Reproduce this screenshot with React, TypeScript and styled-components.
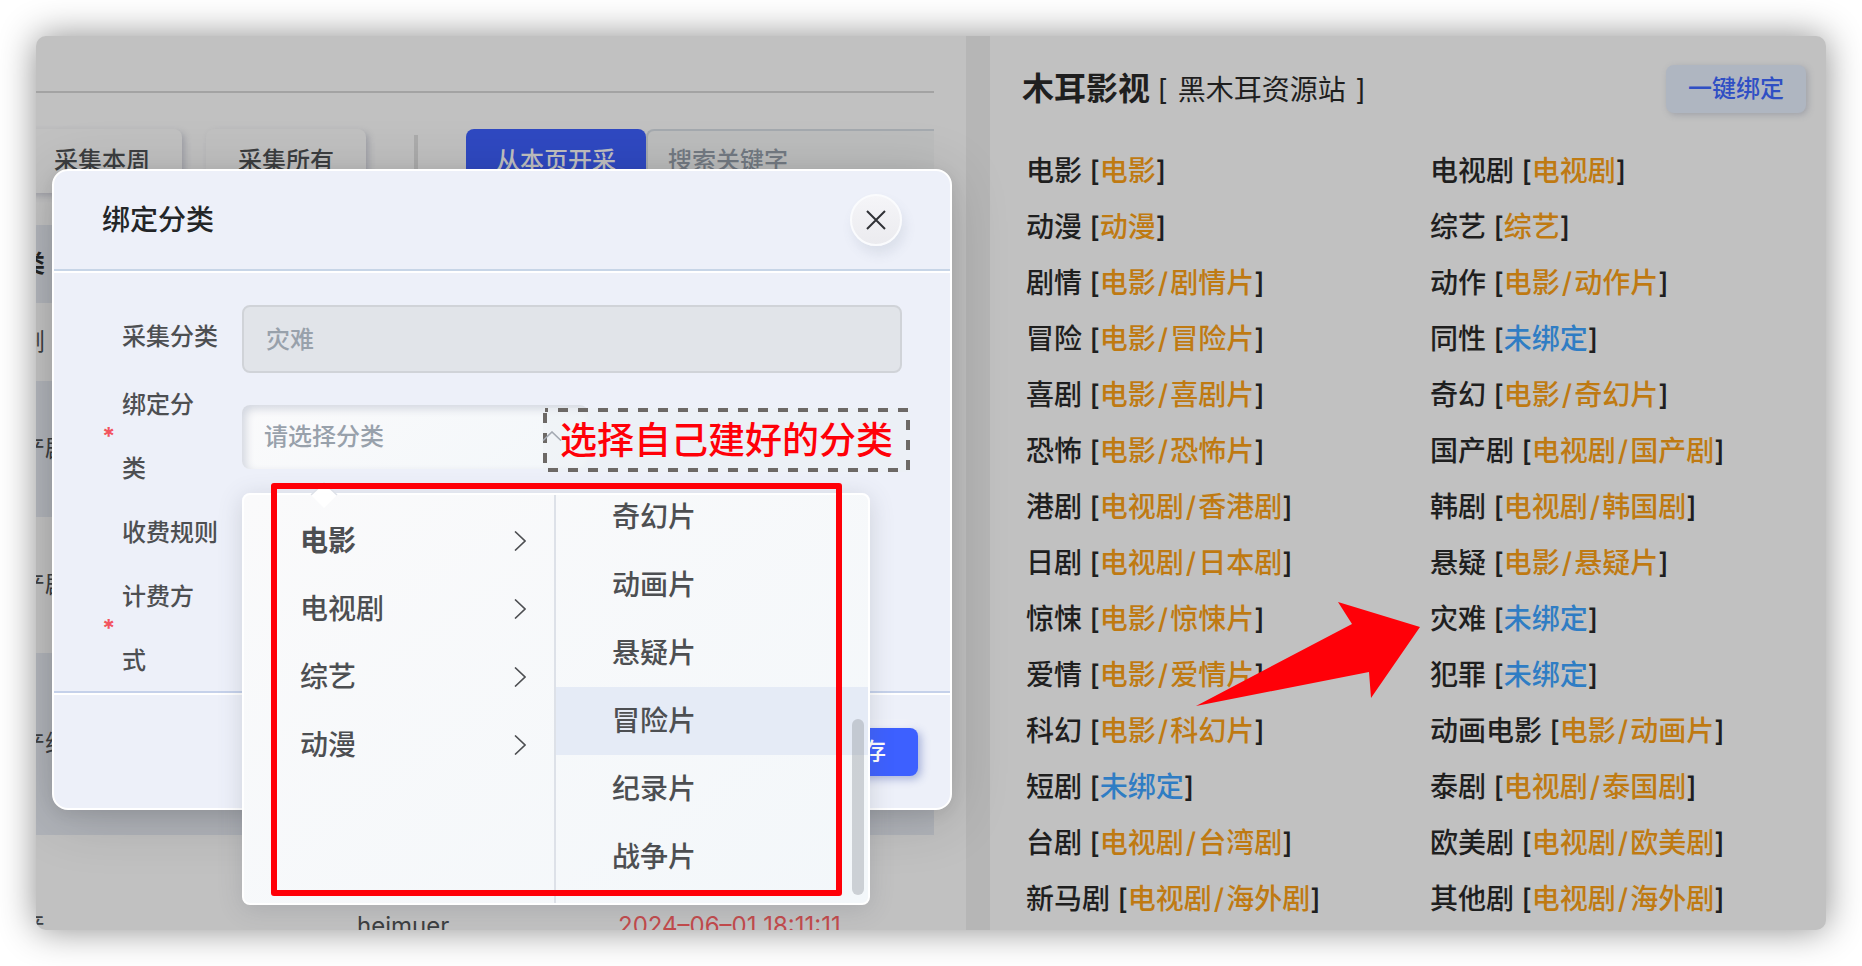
import React from "react";
import styled, { createGlobalStyle, css } from "styled-components";

const GlobalStyle = createGlobalStyle`
  *, *::before, *::after { box-sizing: border-box; }
  body {
    margin: 0;
    background: #fff;
    font-family: Inter, "Noto Sans CJK SC", sans-serif;
    font-size: 24px;
    font-weight: 500;
    line-height: 32px;
    color: #3c3e40;
  }
  button, input { font: inherit; }
  ul { list-style: none; margin: 0; padding: 0; }
`;

const Page = styled.div`
  padding: 36px;
`;

const Frame = styled.main`
  height: calc(100vh - 72px);
  min-height: 894px;
  border-radius: 10px;
  background: #c1c1c1;
  box-shadow: 0 0 36px rgba(0, 0, 0, 0.45);
`;

const Split = styled.div`
  display: grid;
  grid-template-columns: minmax(0, 930fr) 24px minmax(0, 836fr);
  height: 100%;
  overflow: hidden;
  border-radius: 10px;
`;

/* Left side: collection table */

const CollectPane = styled.section`
  position: relative;
  z-index: 1;
  min-width: 0;
  padding-right: 32px;
`;

const TopBar = styled.div`
  height: 57px;
  border-bottom: 2px solid #a3a3a3;
`;

const Toolbar = styled.div`
  display: flex;
  height: 64px;
  margin: 36px 0 32px -14px;
`;

const ToolButton = styled.button<{ $primary?: boolean }>`
  height: 64px;
  border: 0;
  border-radius: 8px;
  white-space: nowrap;
  ${({ $primary }) =>
    $primary
      ? css`
          padding: 0 30px;
          background: #2f49c2;
          color: #c1c1c1;
        `
      : css`
          padding: 0 32px;
          margin-right: 24px;
          background: #c1c1c1;
          color: #3c3e40;
          box-shadow: 3px 3px 6px rgba(110, 112, 130, 0.4);
        `}
`;

const ToolDivider = styled.span`
  width: 4px;
  margin: 6px 48px 6px 24px;
  background: #acacac;
`;

const SearchInput = styled.input`
  flex: 1;
  min-width: 0;
  padding: 0 20px;
  border: 2px solid #a5aaaf;
  border-right: 0;
  border-radius: 8px 0 0 8px;
  background: #bcbdbd;
  &::placeholder { color: #737a83; opacity: 1; }
`;

const RecordTable = styled.table`
  width: 100%;
  border-collapse: collapse;
  table-layout: fixed;
  text-align: left;
`;

const RecordRow = styled.tr<{ $height: number; $tinted?: boolean }>`
  height: ${({ $height }) => $height}px;
  background: ${({ $tinted }) => ($tinted ? "#b0b3b9" : "transparent")};
  th, td { padding: 0; white-space: nowrap; }
  td { font-weight: 400; }
  th { color: #232323; font-weight: 700; }
`;

const CategoryText = styled.span`
  margin-left: -39px;
`;

const TimeText = styled.span`
  color: #c24a4c;
`;

const Gutter = styled.div`
  background: #b6b6b6;
`;

/* Right side: category bindings */

const BindPane = styled.section`
  min-width: 0;
  padding: 29px 0 0 32px;
  color: #1f1f1f;
`;

const BindHeader = styled.header`
  display: flex;
  align-items: center;
  justify-content: space-between;
  height: 48px;
  margin-bottom: 30px;
  padding-right: 20px;
`;

const SiteTitle = styled.h1`
  margin: 0;
  font-size: 32px;
  line-height: 48px;
  white-space: nowrap;
  small { font-size: 28px; font-weight: 400; }
`;

const SiteName = styled.span`
  margin: 0 2px;
`;

const QuickBind = styled.button`
  height: 48px;
  padding: 0 22px;
  border: 0;
  border-radius: 8px;
  background: #afb6c1;
  color: #2f4fc4;
  box-shadow: 2px 2px 6px rgba(100, 105, 125, 0.35);
`;

const BindList = styled.ul`
  display: grid;
  grid-template-columns: 404fr 396fr;
  && { padding-left: 4px; }
`;

const BindItem = styled.li`
  position: relative;
  font-size: 28px;
  line-height: 56px;
  white-space: nowrap;
`;

const BindTarget = styled.span<{ $bound: boolean }>`
  color: ${({ $bound }) => ($bound ? "#bf7a12" : "#2f7dc4")};
`;

const Slash = styled.span`
  margin: 0 2px;
`;

const PointerArrow = styled.svg`
  position: absolute;
  left: -235px;
  top: 11px;
  z-index: 1;
`;

/* Dialog */

const Dialog = styled.section`
  position: absolute;
  left: 16px;
  right: 14px;
  top: 133px;
  border: 2px solid #fff;
  border-radius: 16px;
  background: #edf0f9;
  box-shadow: 0 8px 60px rgba(0, 0, 0, 0.16), 0 4px 16px rgba(0, 0, 0, 0.08);
`;

const DialogHeader = styled.header`
  display: flex;
  align-items: center;
  justify-content: space-between;
  height: 100px;
  padding: 0 48px;
  border-bottom: 2px solid #c7d5e7;
`;

const DialogTitle = styled.h2`
  margin: 0;
  font-size: 28px;
  font-weight: 500;
  color: #232527;
`;

const CloseButton = styled.button`
  display: grid;
  place-items: center;
  width: 52px;
  height: 52px;
  padding: 0;
  border: 2px solid #fafbfd;
  border-radius: 50%;
  background: linear-gradient(#f5f5f8, #ebebef);
  box-shadow: 3px 8px 12px rgba(90, 110, 130, 0.12);
`;

const DialogBody = styled.form`
  height: 422px;
  padding: 32px 48px 0;
  border-top: 2px solid #fff;
`;

const Field = styled.div`
  display: flex;
  align-items: flex-start;
`;

const FieldLabel = styled.label<{ $required?: boolean }>`
  display: flex;
  align-items: center;
  flex: none;
  width: 140px;
  padding-left: ${({ $required }) => ($required ? 0 : 20)}px;
  line-height: 64px;
  color: #4d4f52;
  span { width: ${({ $required }) => ($required ? 72 : 96)}px; }
`;

const Star = styled.i`
  width: 20px;
  font-style: normal;
  font-weight: 700;
  color: #f2545f;
`;

const DisabledInput = styled.input`
  flex: 1;
  min-width: 0;
  height: 68px;
  padding: 0 22px 4px;
  border: 2px solid #d0d3d8;
  border-radius: 8px;
  background: #e1e4e9;
  color: #98a1ab;
`;

const Cascader = styled.div`
  position: relative;
  width: 346px;
  height: 64px;
  margin-top: 32px;
`;

const CascaderInput = styled.input`
  width: 100%;
  height: 64px;
  padding: 0 22px 2px;
  border: 0;
  border-radius: 8px;
  background: linear-gradient(145deg, #fafafb, #f3f7fa);
  box-shadow: inset 4px 4px 8px #d3d7e0;
  &::placeholder { color: #98a1ab; opacity: 1; }
`;

const Caret = styled.svg`
  position: absolute;
  left: 300px;
  top: 26px;
  z-index: 3;
`;

const Note = styled.div`
  position: absolute;
  left: 301px;
  top: 3px;
  z-index: 2;
  width: 367px;
  height: 64px;
  padding-left: 17px;
  font-size: 37px;
  line-height: 66px;
  color: #ff0008;
  white-space: nowrap;
  background: rgba(236, 240, 244, 0.5);
  svg { position: absolute; left: 0; top: 0; }
`;

const Popup = styled.div`
  position: absolute;
  left: 0;
  top: 88px;
  z-index: 1;
  display: grid;
  grid-template-columns: 310px 314px;
  width: 628px;
  height: 412px;
  border: 2px solid #fff;
  border-radius: 8px;
  background: linear-gradient(145deg, #fafafb, #f3f7fa);
  box-shadow: 0 4px 24px rgba(80, 84, 100, 0.2);
  font-size: 28px;
  color: #4d4f52;
`;

const PopupTip = styled.svg`
  position: absolute;
  left: 66px;
  top: -13px;
`;

const Menu = styled.ul<{ $scrolled?: boolean }>`
  display: flex;
  flex-direction: column;
  justify-content: ${({ $scrolled }) => ($scrolled ? "flex-end" : "flex-start")};
  min-width: 0;
  height: 408px;
  overflow: hidden;
  && { padding: 12px 0; }
  & + & { border-left: 2px solid #dde1e8; }
`;

const MenuItem = styled.li<{ $active?: boolean; $hover?: boolean }>`
  display: flex;
  flex: none;
  align-items: center;
  justify-content: space-between;
  height: 68px;
  padding: 0 28px 0 56px;
  font-weight: ${({ $active }) => ($active ? 700 : 500)};
  background: ${({ $hover }) => ($hover ? "#e5ebf6" : "transparent")};
`;

const Thumb = styled.span`
  position: absolute;
  right: 4px;
  bottom: 8px;
  width: 12px;
  height: 176px;
  border-radius: 6px;
  background: rgba(144, 150, 158, 0.4);
`;

const RedBox = styled.div`
  position: absolute;
  left: 27px;
  top: -12px;
  width: 571px;
  height: 413px;
  border: 6px solid #ff0008;
  border-radius: 3px;
`;

const DialogFooter = styled.footer`
  display: flex;
  justify-content: flex-end;
  height: 115px;
  padding: 33px 32px 0;
  border-top: 2px solid #fff;
  box-shadow: 0 -2px 0 #c5d1ea;
`;

const SaveButton = styled.button`
  height: 48px;
  padding: 0 32px;
  border: 0;
  border-radius: 8px;
  background: #3d60ff;
  color: #fff;
  box-shadow: 3px 3px 8px rgba(80, 100, 180, 0.45), -3px -3px 8px rgba(255, 255, 255, 0.7);
`;

type Row = { category: string; height: number; tinted?: boolean; source?: string; time?: string };

const rows: Row[] = [
  { category: "短剧", height: 78 },
  { category: "国产剧", height: 136, tinted: true },
  { category: "国产剧", height: 136 },
  { category: "国产综艺", height: 182, tinted: true },
  { category: "国产", height: 182, source: "heimuer", time: "2024–06–01 18:11:11" },
];

const bindings: [string, string[]][] = [
  ["电影", ["电影"]],
  ["电视剧", ["电视剧"]],
  ["动漫", ["动漫"]],
  ["综艺", ["综艺"]],
  ["剧情", ["电影", "剧情片"]],
  ["动作", ["电影", "动作片"]],
  ["冒险", ["电影", "冒险片"]],
  ["同性", []],
  ["喜剧", ["电影", "喜剧片"]],
  ["奇幻", ["电影", "奇幻片"]],
  ["恐怖", ["电影", "恐怖片"]],
  ["国产剧", ["电视剧", "国产剧"]],
  ["港剧", ["电视剧", "香港剧"]],
  ["韩剧", ["电视剧", "韩国剧"]],
  ["日剧", ["电视剧", "日本剧"]],
  ["悬疑", ["电影", "悬疑片"]],
  ["惊悚", ["电影", "惊悚片"]],
  ["灾难", []],
  ["爱情", ["电影", "爱情片"]],
  ["犯罪", []],
  ["科幻", ["电影", "科幻片"]],
  ["动画电影", ["电影", "动画片"]],
  ["短剧", []],
  ["泰剧", ["电视剧", "泰国剧"]],
  ["台剧", ["电视剧", "台湾剧"]],
  ["欧美剧", ["电视剧", "欧美剧"]],
  ["新马剧", ["电视剧", "海外剧"]],
  ["其他剧", ["电视剧", "海外剧"]],
];

const groups = ["电影", "电视剧", "综艺", "动漫"];
const genres = ["奇幻片", "动画片", "悬疑片", "冒险片", "纪录片", "战争片"];

const BindDialog = () => (
  <Dialog role="dialog" aria-labelledby="dialog-title">
    <DialogHeader>
      <DialogTitle id="dialog-title">绑定分类</DialogTitle>
      <CloseButton type="button" aria-label="关闭">
        <svg width="20" height="20" viewBox="0 0 20 20" fill="none" stroke="#303236" strokeWidth="2">
          <path d="M1 1L19 19M19 1L1 19" />
        </svg>
      </CloseButton>
    </DialogHeader>
    <DialogBody>
      <Field>
        <FieldLabel htmlFor="source-category">
          <span>采集分类</span>
        </FieldLabel>
        <DisabledInput id="source-category" value="灾难" disabled readOnly />
      </Field>
      <Field>
        <FieldLabel htmlFor="own-category" $required>
          <Star>*</Star>
          <span>绑定分类</span>
        </FieldLabel>
        <Cascader>
          <CascaderInput id="own-category" placeholder="请选择分类" readOnly role="combobox" aria-expanded="true" />
          <Caret width="20" height="10" viewBox="0 0 20 10" fill="none" stroke="#a3a9b2" strokeWidth="1.6">
            <path d="M1 9.5L10 1L19 9.5" />
          </Caret>
          <Popup>
            <PopupTip width="28" height="28" viewBox="0 0 28 28">
              <path d="M14 1L27 13L14 26L1 13Z" fill="#fff" />
              <path d="M1 13L14 1L27 13" fill="none" stroke="#dde1e8" strokeWidth="1.5" />
            </PopupTip>
            <Menu role="menu">
              {groups.map((name, i) => (
                <MenuItem key={name} role="menuitem" $active={i === 0}>
                  {name}
                  <svg width="12" height="20" viewBox="0 0 12 20" fill="none" stroke="#4d4f52" strokeWidth="1.6">
                    <path d="M1 0.5L11 10L1 19.5" />
                  </svg>
                </MenuItem>
              ))}
            </Menu>
            <Menu role="menu" $scrolled>
              {genres.map((name) => (
                <MenuItem key={name} role="menuitem" $hover={name === "冒险片"}>
                  {name}
                </MenuItem>
              ))}
            </Menu>
            <Thumb />
            <RedBox />
          </Popup>
          <Note>
            <svg width="367" height="64" fill="none" stroke="#6d6966" strokeWidth="4">
              <rect x="2" y="2" width="363" height="60" strokeDasharray="10 10" strokeDashoffset="7" />
            </svg>
            选择自己建好的分类
          </Note>
        </Cascader>
      </Field>
      <Field>
        <FieldLabel as="div">
          <span>收费规则</span>
        </FieldLabel>
      </Field>
      <Field>
        <FieldLabel as="div" $required>
          <Star>*</Star>
          <span>计费方式</span>
        </FieldLabel>
      </Field>
    </DialogBody>
    <DialogFooter>
      <SaveButton type="button">保存</SaveButton>
    </DialogFooter>
  </Dialog>
);

export default function App() {
  return (
    <>
      <GlobalStyle />
      <Page>
        <Frame>
          <Split>
            <CollectPane>
              <TopBar />
              <Toolbar>
                <ToolButton type="button">采集本周</ToolButton>
                <ToolButton type="button">采集所有</ToolButton>
                <ToolDivider />
                <ToolButton type="button" $primary>
                  从本页开采
                </ToolButton>
                <SearchInput type="search" aria-label="搜索关键字" placeholder="搜索关键字" />
              </Toolbar>
              <RecordTable>
                <colgroup>
                  <col style={{ width: 321 }} />
                  <col style={{ width: 261 }} />
                  <col />
                </colgroup>
                <thead>
                  <RecordRow $height={78} $tinted>
                    <th scope="col" colSpan={3}>
                      <CategoryText>分类</CategoryText>
                    </th>
                  </RecordRow>
                </thead>
                <tbody>
                  {rows.map((row, i) => (
                    <RecordRow key={i} $height={row.height} $tinted={row.tinted}>
                      <td>
                        <CategoryText>{row.category}</CategoryText>
                      </td>
                      <td>{row.source}</td>
                      <td>
                        <TimeText>{row.time}</TimeText>
                      </td>
                    </RecordRow>
                  ))}
                </tbody>
              </RecordTable>
              <BindDialog />
            </CollectPane>
            <Gutter />
            <BindPane>
              <BindHeader>
                <SiteTitle>
                  木耳影视{" "}
                  <small>
                    [ <SiteName>黑木耳资源站</SiteName> ]
                  </small>
                </SiteTitle>
                <QuickBind type="button">一键绑定</QuickBind>
              </BindHeader>
              <BindList>
                {bindings.map(([name, target]) => (
                  <BindItem key={name}>
                    {name} [
                    <BindTarget $bound={target.length > 0}>
                      {target.length === 0 && "未绑定"}
                      {target.map((part, i) => (
                        <React.Fragment key={part}>
                          {i > 0 && <Slash>/</Slash>}
                          {part}
                        </React.Fragment>
                      ))}
                    </BindTarget>
                    ]
                    {name === "灾难" && (
                      <PointerArrow width="226" height="106" viewBox="0 0 226 106" fill="#ff0008">
                        <path d="M1 104L157 22L143 0L225 25L176 96L174 70Z" />
                      </PointerArrow>
                    )}
                  </BindItem>
                ))}
              </BindList>
            </BindPane>
          </Split>
        </Frame>
      </Page>
    </>
  );
}
